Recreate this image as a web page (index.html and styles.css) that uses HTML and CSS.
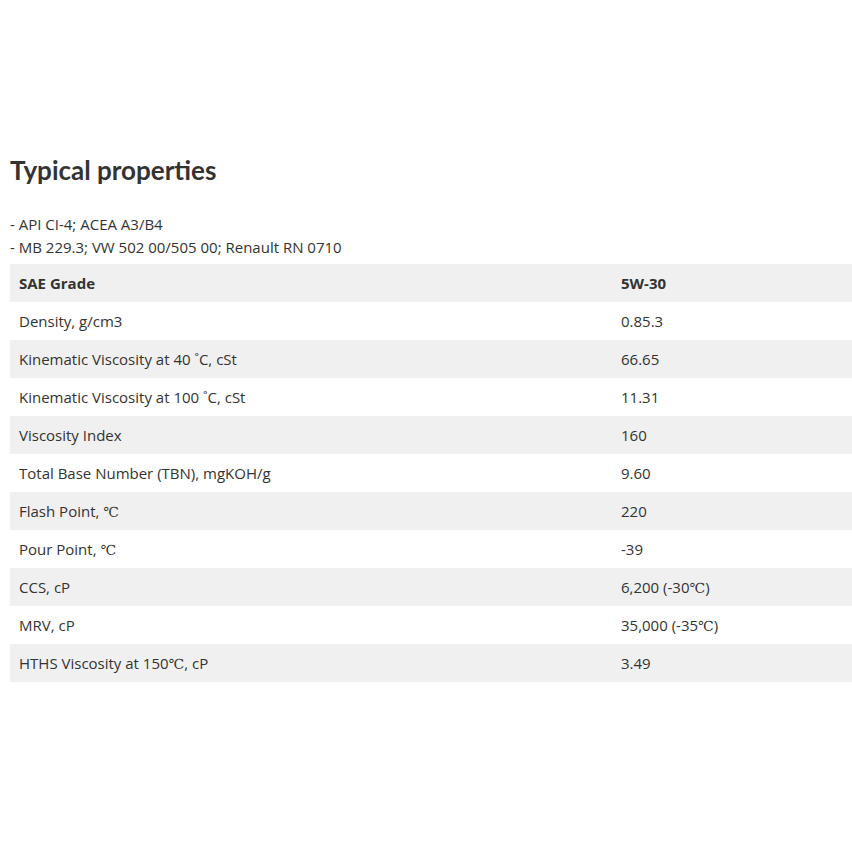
FILE: index.html
```html
<!DOCTYPE html>
<html>
<head>
<meta charset="utf-8">
<link rel="stylesheet" href="styles.css">
</head>
<body>
<main class="page">
  <h2 class="title">Typical properties</h2>
  <div class="specs">
    <div>- API CI-4; ACEA A3/B4</div>
    <div>- MB 229.3; VW 502 00/505 00; Renault RN 0710</div>
  </div>
  <table class="props">
    <tr class="head"><td>SAE Grade</td><td>5W-30</td></tr>
    <tr><td>Density, g/cm3</td><td>0.85.3</td></tr>
    <tr><td>Kinematic Viscosity at 40 ˚C, cSt</td><td>66.65</td></tr>
    <tr><td>Kinematic Viscosity at 100 ˚C, cSt</td><td>11.31</td></tr>
    <tr><td>Viscosity Index</td><td>160</td></tr>
    <tr><td>Total Base Number (TBN), mgKOH/g</td><td>9.60</td></tr>
    <tr><td>Flash Point, <span class="deg">℃</span></td><td>220</td></tr>
    <tr><td>Pour Point, <span class="deg">℃</span></td><td>-39</td></tr>
    <tr><td>CCS, cP</td><td>6,200 (-30<span class="deg">℃</span>)</td></tr>
    <tr><td>MRV, cP</td><td>35,000 (-35<span class="deg">℃</span>)</td></tr>
    <tr><td>HTHS Viscosity at 150<span class="deg">℃</span>, cP</td><td>3.49</td></tr>
  </table>
</main>
</body>
</html>
```
FILE: styles.css
```css
html, body {
  margin: 0;
  padding: 0;
  background: #fff;
}
body {
  font-family: "Open Sans", "Noto Sans", sans-serif;
  color: #333;
}
.page {
  padding: 152px 0 0 10px;
}
.title {
  margin: 0;
  font-family: "Lato", "Open Sans", sans-serif;
  font-size: 26px;
  font-weight: 700;
  line-height: 36px;
  color: #333;
}
.specs {
  margin-top: 25px;
  font-size: 15px;
  line-height: 23px;
  color: #333;
}
.props {
  margin-top: 5px;
  width: 842px;
  border-collapse: collapse;
  font-size: 15px;
  color: #333;
}
.props td {
  height: 38px;
  padding: 0 9px;
  vertical-align: middle;
  box-sizing: border-box;
}
.props td:first-child {
  width: 602px;
}
.props tr:nth-child(odd) {
  background: #f0f0f0;
}
.props tr.head td {
  font-weight: 700;
}
.deg {
  font-family: "Liberation Serif", "DejaVu Serif", serif;
  font-size: 14px;
}
```
